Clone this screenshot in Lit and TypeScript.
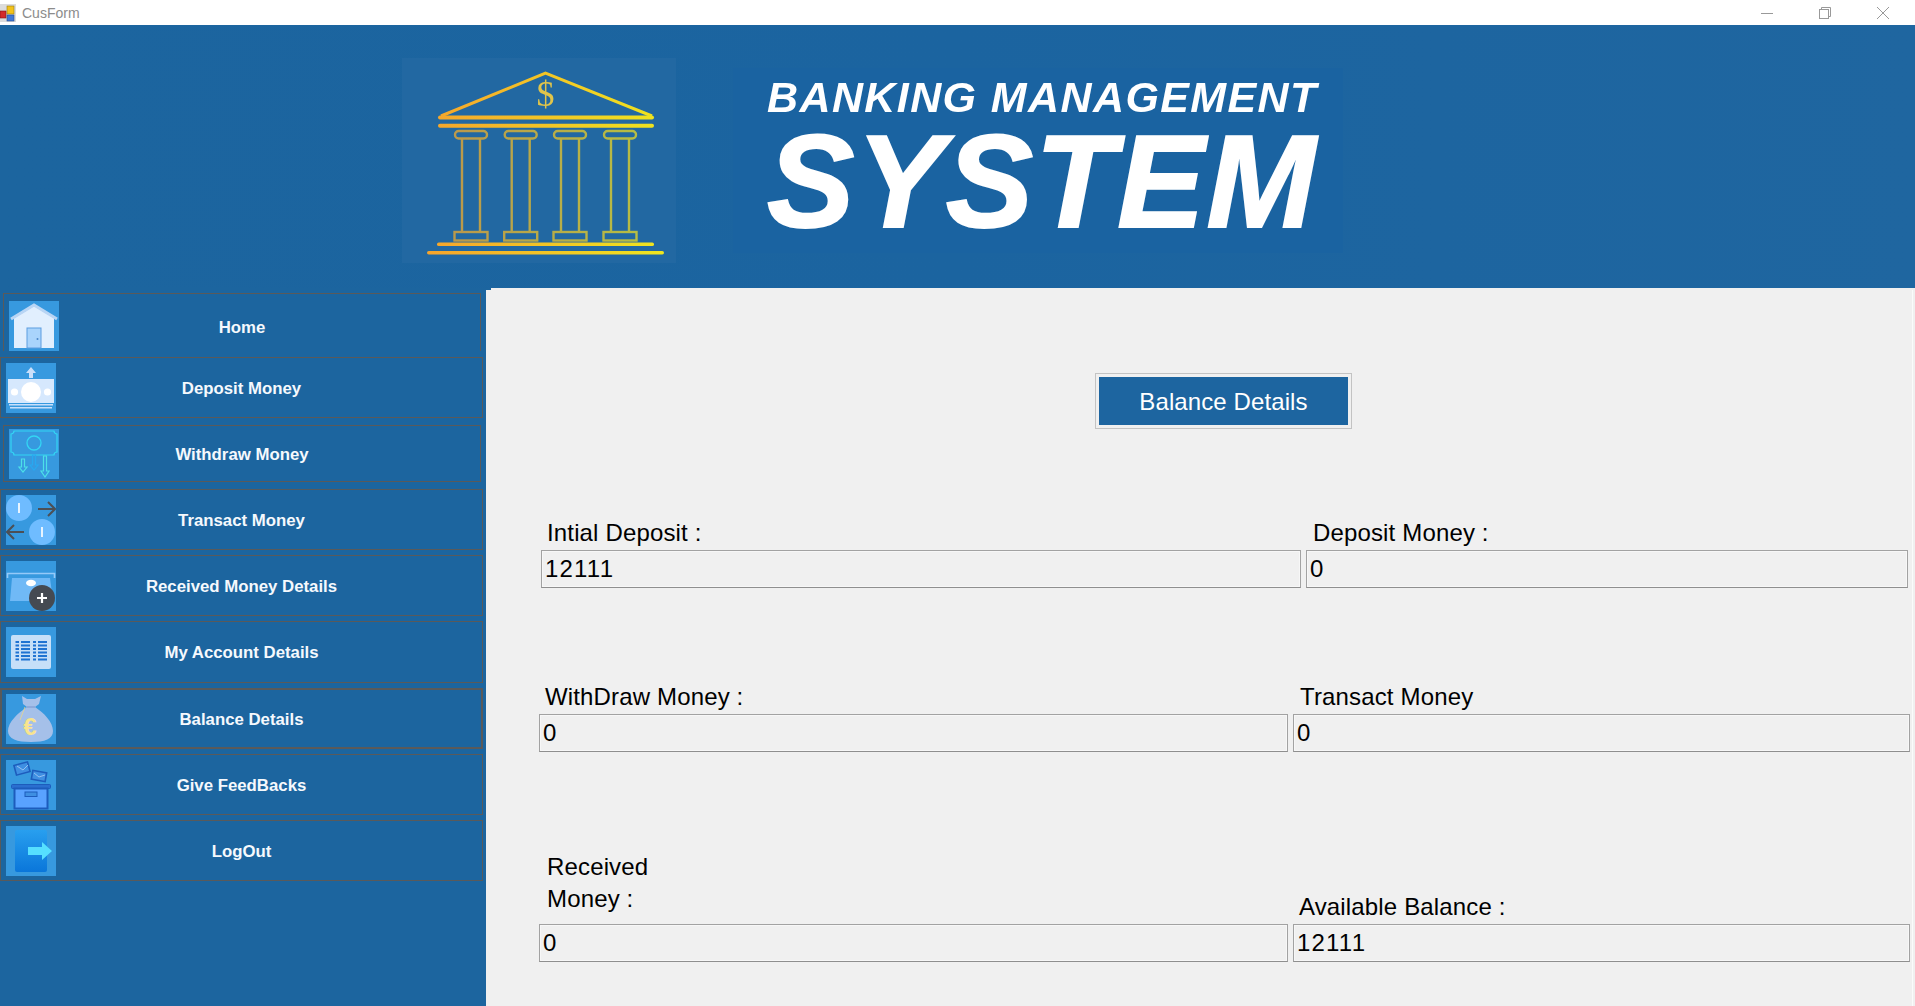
import { LitElement, html, svg, css } from 'lit';
import { customElement } from 'lit/decorators.js';

const BANK_COLUMNS = [471, 520.7, 570, 620];

const bankLogo = svg`
  <svg class="bank-svg" viewBox="402 58 274 205" width="274" height="205">
    <defs>
      <linearGradient id="gold" gradientUnits="userSpaceOnUse" x1="427" y1="0" x2="664" y2="0">
        <stop offset="0" stop-color="#f6a42c"></stop>
        <stop offset="1" stop-color="#efe61f"></stop>
      </linearGradient>
    </defs>
    <path d="M441 116 L545.5 73 L652 116" fill="none" stroke="url(#gold)" stroke-width="3"></path>
    <rect x="438" y="115.5" width="216" height="4" rx="2" fill="url(#gold)"></rect>
    <rect x="438" y="123.7" width="216" height="4" rx="2" fill="url(#gold)"></rect>
    <text x="545.5" y="106" text-anchor="middle" font-family="Liberation Serif, serif" font-size="36" fill="#e0c44a">$</text>
    ${BANK_COLUMNS.map(
      (x) => svg`
      <g fill="none" stroke="url(#gold)" stroke-width="2.4" opacity="0.72">
        <rect x=${x - 16} y="131" width="32" height="7.5" rx="3.7"></rect>
        <path d="M${x - 9} 138.5 V232 M${x + 9} 138.5 V232"></path>
        <rect x=${x - 16.5} y="232" width="33" height="8.5"></rect>
      </g>`
    )}
    <rect x="437" y="242.6" width="217" height="3.5" rx="1.7" fill="url(#gold)"></rect>
    <rect x="427" y="251" width="237" height="3.5" rx="1.7" fill="url(#gold)"></rect>
  </svg>
`;

const ICONS: Record<string, unknown> = {
  home: svg`
    <path d="M5 17 L25 5 L45 17 V47 H5 Z" fill="#e1effe"></path>
    <path d="M2 18 L25 4 L48 18" fill="none" stroke="#b9d5f4" stroke-width="3"></path>
    <rect x="18" y="27" width="14" height="20" fill="#a9d4fc" stroke="#5d9de0" stroke-width="1"></rect>
    <circle cx="28.5" cy="38" r="1" fill="#4a86c8"></circle>
  `,
  deposit: svg`
    <path d="M25 4 L30 10 H27 V15 H23 V10 H20 Z" fill="#c9dffa"></path>
    <rect x="2" y="16" width="46" height="24" fill="#d6e8fd"></rect>
    <circle cx="25" cy="29" r="10" fill="#fff"></circle>
    <circle cx="8.5" cy="29" r="3.6" fill="#fff"></circle>
    <circle cx="41.5" cy="29" r="3.6" fill="#fff"></circle>
    <rect x="3" y="41" width="44" height="1.5" fill="#c9dffa"></rect>
    <rect x="4" y="44" width="42" height="1.5" fill="#c9dffa"></rect>
  `,
  withdraw: svg`
    <path d="M5 2 H45 A3 3 0 0 0 48 5 V23 A3 3 0 0 0 45 26 H5 A3 3 0 0 0 2 23 V5 A3 3 0 0 0 5 2 Z" fill="none" stroke="#33d6f4" stroke-width="1.2"></path>
    <circle cx="25" cy="14" r="7" fill="none" stroke="#33d6f4" stroke-width="1.3"></circle>
    <path d="M12.5 30 H15.5 V38 H18 L14 43 L10 38 H12.5 Z" fill="none" stroke="#4ce0e8" stroke-width="1.2"></path>
    <path d="M23.5 26 H26.5 V36 H29 L25 41 L21 36 H23.5 Z" fill="none" stroke="#28a8f0" stroke-width="1.2"></path>
    <path d="M34.5 27 H37.5 V42 H40 L36 48 L32 42 H34.5 Z" fill="none" stroke="#4ce0e8" stroke-width="1.2"></path>
  `,
  transact: svg`
    <circle cx="13" cy="13" r="13" fill="#6fbcff"></circle>
    <rect x="12" y="8" width="2" height="10" fill="#e8f4ff"></rect>
    <circle cx="36" cy="37" r="13" fill="#6fbcff"></circle>
    <rect x="35" y="32" width="2" height="10" fill="#e8f4ff"></rect>
    <path d="M32 14 H48 M42 7 L49 14 L42 21" fill="none" stroke="#4c4f55" stroke-width="2"></path>
    <path d="M18 37 H2 M8 30 L1 37 L8 44" fill="none" stroke="#4c4f55" stroke-width="2"></path>
  `,
  received: svg`
    <path d="M1.5 17 V12.5 H48.5 V17" fill="none" stroke="#95c9f8" stroke-width="1.6"></path>
    <path d="M6 17 H44 L47 40 H4 Z" fill="#70b9f6"></path>
    <ellipse cx="25" cy="22" rx="5" ry="3.2" fill="#fff"></ellipse>
    <circle cx="36" cy="37" r="13" fill="#454a52"></circle>
    <path d="M36 32 V42 M31 37 H41" stroke="#fff" stroke-width="2.2"></path>
  `,
  account: svg`
    <rect x="5" y="8" width="40" height="34" rx="2" fill="#c6dff8"></rect>
    ${[15, 18.5, 22, 25.5, 29, 32.5].map(
      (y) => svg`
      <path d="M9.5 ${y} H13 M15 ${y} H24 M27 ${y} H30 M32 ${y} H41" stroke="#1f73d2" stroke-width="1.8"></path>`
    )}
  `,
  balance: svg`
    <path d="M16 2 L21 5 H29 L35 2 L33 10 L29 13 C38 19 47 28 47 37 C47 45 39 48 25 48 C11 48 2 45 2 37 C2 28 12 19 21 13 L17 10 Z" fill="#a5c0e9"></path>
    <path d="M21 13 H29" stroke="#8faadb" stroke-width="2"></path>
    <path d="M19 13 L14 26" stroke="#e7d68c" stroke-width="0.8" fill="none"></path>
    <text x="24" y="41" text-anchor="middle" font-family="Liberation Sans, sans-serif" font-size="24" fill="#f8e48e">€</text>
  `,
  feedback: svg`
    <g fill="#3f8fe2" stroke="#1d5cbc" stroke-width="1.6">
      <rect x="9" y="3.5" width="14" height="10" transform="rotate(-15 16 8.5)"></rect>
      <rect x="26" y="11.5" width="14" height="9" transform="rotate(10 33 16)"></rect>
    </g>
    <path d="M11 6 L17 10 L22 5 M28 13 L33 17 L39 15" fill="none" stroke="#a9cdf5" stroke-width="0.8"></path>
    <rect x="5.5" y="24.5" width="39" height="4" rx="1" fill="#2a6fd0" stroke="#1d5cbc"></rect>
    <rect x="8.5" y="28.5" width="33" height="20" fill="#59a2ff" stroke="#1d5cbc" stroke-width="2"></rect>
    <rect x="19" y="32" width="12" height="4.5" fill="#3f8fe2" stroke="#1d5cbc"></rect>
  `,
  logout: svg`
    <defs>
      <linearGradient id="door" x1="0" y1="0" x2="0" y2="1">
        <stop offset="0" stop-color="#289fef"></stop>
        <stop offset="1" stop-color="#0a76da"></stop>
      </linearGradient>
    </defs>
    <rect x="9" y="4" width="32" height="42" rx="2" fill="url(#door)"></rect>
    <path d="M22 21 H36 V16 L46 25 L36 34 V29 H22 Z" fill="#56dfff"></path>
  `,
};

interface MenuItem {
  label: string;
  icon: string;
  height: number;
  gap: number;
  inset?: boolean;
  heavy?: boolean;
  clipped?: boolean;
}

const MENU: MenuItem[] = [
  { label: 'Home', icon: 'home', height: 58, gap: 0, inset: true, clipped: true },
  { label: 'Deposit Money', icon: 'deposit', height: 61, gap: 6 },
  { label: 'Withdraw Money', icon: 'withdraw', height: 57, gap: 7, inset: true },
  { label: 'Transact Money', icon: 'transact', height: 61, gap: 7 },
  { label: 'Received Money Details', icon: 'received', height: 61, gap: 5 },
  { label: 'My Account Details', icon: 'account', height: 62, gap: 5 },
  { label: 'Balance Details', icon: 'balance', height: 61, gap: 5, heavy: true },
  { label: 'Give FeedBacks', icon: 'feedback', height: 61, gap: 5 },
  { label: 'LogOut', icon: 'logout', height: 61, gap: 5 },
];

@customElement('app-root')
export class AppRoot extends LitElement {
  static styles = css`
    :host {
      display: flex;
      flex-direction: column;
      height: 100vh;
      overflow: hidden;
      background: #1c659f;
      font-family: 'Liberation Sans', Arial, sans-serif;
    }

    .titlebar {
      height: 25px;
      flex: none;
      display: flex;
      align-items: center;
      background: #fff;
      color: #8c8c8c;
      font-size: 14px;
    }
    .app-icon {
      width: 16px;
      height: 18px;
      margin-right: 6px;
      flex: none;
    }
    .title {
      flex: 1;
    }
    .win-btn {
      width: 12px;
      height: 12px;
      flex: none;
      margin-right: 46px;
    }
    .win-btn:last-child {
      margin-right: 26px;
    }

    .banner {
      height: 263px;
      flex: none;
      box-sizing: border-box;
      padding: 33px 0 0 402px;
      display: flex;
      align-items: flex-start;
      gap: 57px;
      background: linear-gradient(90deg, #1c659f, #1b64a0 50%, #1f66a0);
    }
    .bank-logo {
      width: 274px;
      height: 205px;
      background: #2268a2;
    }
    .bank-svg {
      display: block;
      filter: blur(0.6px);
    }
    .brand {
      width: 610px;
      height: 185px;
      margin-top: 10px;
      box-sizing: border-box;
      padding: 4px 0 0 34px;
      background: #1a63a1;
      color: #fff;
      font-weight: 700;
      white-space: nowrap;
      filter: blur(0.4px);
    }
    .brand-top {
      font-size: 43px;
      line-height: 50px;
      font-style: italic;
      letter-spacing: 1.4px;
    }
    .brand-main {
      font-size: 131px;
      line-height: 128px;
      margin-top: -4px;
      letter-spacing: 2px;
      font-style: italic;
      -webkit-text-stroke: 2px #fff;
    }

    .body {
      flex: 1;
      display: flex;
      min-height: 0;
    }

    .sidebar {
      width: 486px;
      flex: none;
      box-sizing: border-box;
      padding: 5px 3px 0 0;
      display: flex;
      flex-direction: column;
    }
    .menu-row {
      flex: none;
      box-sizing: border-box;
      display: grid;
      grid-template-columns: 50px 1fr 50px;
      align-items: center;
      padding: 0 5px;
      border: 1px solid #5a5a5a;
      color: #f5f9fd;
      font-size: 16.8px;
      font-weight: 700;
      text-align: center;
    }
    .menu-label {
      padding-top: 2px;
    }
    .menu-row.inset {
      margin: 0 2px 0 3px;
    }
    .menu-row.heavy {
      border-width: 2px;
      padding: 0 4px;
    }
    .menu-row.clipped {
      border-bottom: none;
      align-items: end;
    }
    .menu-row.clipped .menu-label {
      align-self: center;
      padding-top: 10px;
    }
    .menu-icon {
      display: block;
      width: 50px;
      height: 50px;
      background: #3799df;
    }

    .panel {
      position: relative;
      flex: 1;
      min-width: 0;
      background: #f0f0f0;
      padding-top: 85px;
    }
    .panel::before {
      content: '';
      position: absolute;
      left: 0;
      top: 0;
      width: 5px;
      height: 2px;
      background: #1c659f;
    }
    .panel::after {
      content: '';
      position: absolute;
      right: 2px;
      top: 2px;
      bottom: 0;
      width: 1px;
      background: #fbfbfb;
    }

    .panel-title {
      width: 257px;
      height: 56px;
      margin-left: 609px;
      padding-top: 2px;
      box-sizing: border-box;
      display: flex;
      align-items: center;
      justify-content: center;
      border: 1px solid #c3c3c3;
      background: #1d65a0;
      color: #fff;
      font-size: 24px;
      letter-spacing: 0.1px;
      box-shadow: inset 0 0 0 3px #f0f0f0;
    }

    .form-row {
      display: grid;
      align-items: end;
      column-gap: 5px;
    }
    .row-one {
      grid-template-columns: 760px 602px;
      margin: 90px 0 0 55px;
    }
    .row-two {
      grid-template-columns: 749px 617px;
      margin: 95px 0 0 53px;
    }
    .row-three {
      grid-template-columns: 749px 617px;
      margin: 99px 0 0 53px;
    }

    .field-label {
      font-size: 24px;
      line-height: 28px;
      letter-spacing: 0.15px;
      color: #000;
      margin-bottom: 3px;
      white-space: nowrap;
    }
    .field-label.two-line {
      line-height: 32px;
      margin-bottom: 9px;
      white-space: normal;
      width: 130px;
    }
    .offset-6 {
      padding-left: 6px;
    }
    .offset-7 {
      padding-left: 7px;
    }
    .offset-8 {
      padding-left: 8px;
    }

    .field-box {
      box-sizing: border-box;
      height: 38px;
      padding: 0 3px;
      display: flex;
      align-items: center;
      border: 1px solid #a2a2a2;
      border-bottom-color: #8f8f8f;
      box-shadow: inset 0 0 0 1px #f7f7f7;
      background: #f0f0f0;
      color: #000;
      font-size: 24px;
      letter-spacing: 1.2px;
    }
  `;

  renderField(label: string, value: string, offset: string, twoLine = false) {
    return html`
      <div>
        <div class="field-label ${offset} ${twoLine ? 'two-line' : ''}">${label}</div>
        <div class="field-box">${value}</div>
      </div>
    `;
  }

  render() {
    return html`
      <div class="titlebar">
        <svg class="app-icon" viewBox="0 0 16 18">
          <rect x="0" y="0" width="16" height="18" fill="#dcdcdc"></rect>
          <rect x="7" y="2" width="7" height="8" fill="#f3c21a" stroke="#9b7d10" stroke-width="0.6"></rect>
          <rect x="0" y="7" width="6" height="7" fill="#d42a2a" stroke="#7d1515" stroke-width="0.6"></rect>
          <rect x="7" y="11" width="7" height="6" fill="#3f78d8" stroke="#244a8d" stroke-width="0.6"></rect>
        </svg>
        <span class="title">CusForm</span>
        <svg class="win-btn" viewBox="0 0 12 12"><path d="M0 6.5 H12" stroke="#999" fill="none"></path></svg>
        <svg class="win-btn" viewBox="0 0 12 12" fill="none" stroke="#999">
          <rect x="0.5" y="2.5" width="9" height="9"></rect>
          <path d="M2.5 2.5 V0.5 H11.5 V9.5 H9.5"></path>
        </svg>
        <svg class="win-btn" viewBox="0 0 12 12"><path d="M0 0 L12 12 M12 0 L0 12" stroke="#999" fill="none"></path></svg>
      </div>

      <div class="banner">
        <div class="bank-logo">${bankLogo}</div>
        <div class="brand">
          <div class="brand-top">BANKING MANAGEMENT</div>
          <div class="brand-main">SYSTEM</div>
        </div>
      </div>

      <div class="body">
        <nav class="sidebar">
          ${MENU.map(
            (m) => html`
              <div
                class="menu-row ${m.inset ? 'inset' : ''} ${m.heavy ? 'heavy' : ''} ${m.clipped ? 'clipped' : ''}"
                style="height:${m.height}px;margin-top:${m.gap}px"
              >
                <svg class="menu-icon" viewBox="0 0 50 50">${ICONS[m.icon]}</svg>
                <span class="menu-label">${m.label}</span>
              </div>
            `
          )}
        </nav>

        <main class="panel">
          <div class="panel-title">Balance Details</div>
          <div class="form-row row-one">
            ${this.renderField('Intial Deposit :', '12111', 'offset-6')}
            ${this.renderField('Deposit Money :', '0', 'offset-7')}
          </div>
          <div class="form-row row-two">
            ${this.renderField('WithDraw Money :', '0', 'offset-6')}
            ${this.renderField('Transact Money', '0', 'offset-7')}
          </div>
          <div class="form-row row-three">
            ${this.renderField('Received Money :', '0', 'offset-8', true)}
            ${this.renderField('Available Balance :', '12111', 'offset-6')}
          </div>
        </main>
      </div>
    `;
  }
}
